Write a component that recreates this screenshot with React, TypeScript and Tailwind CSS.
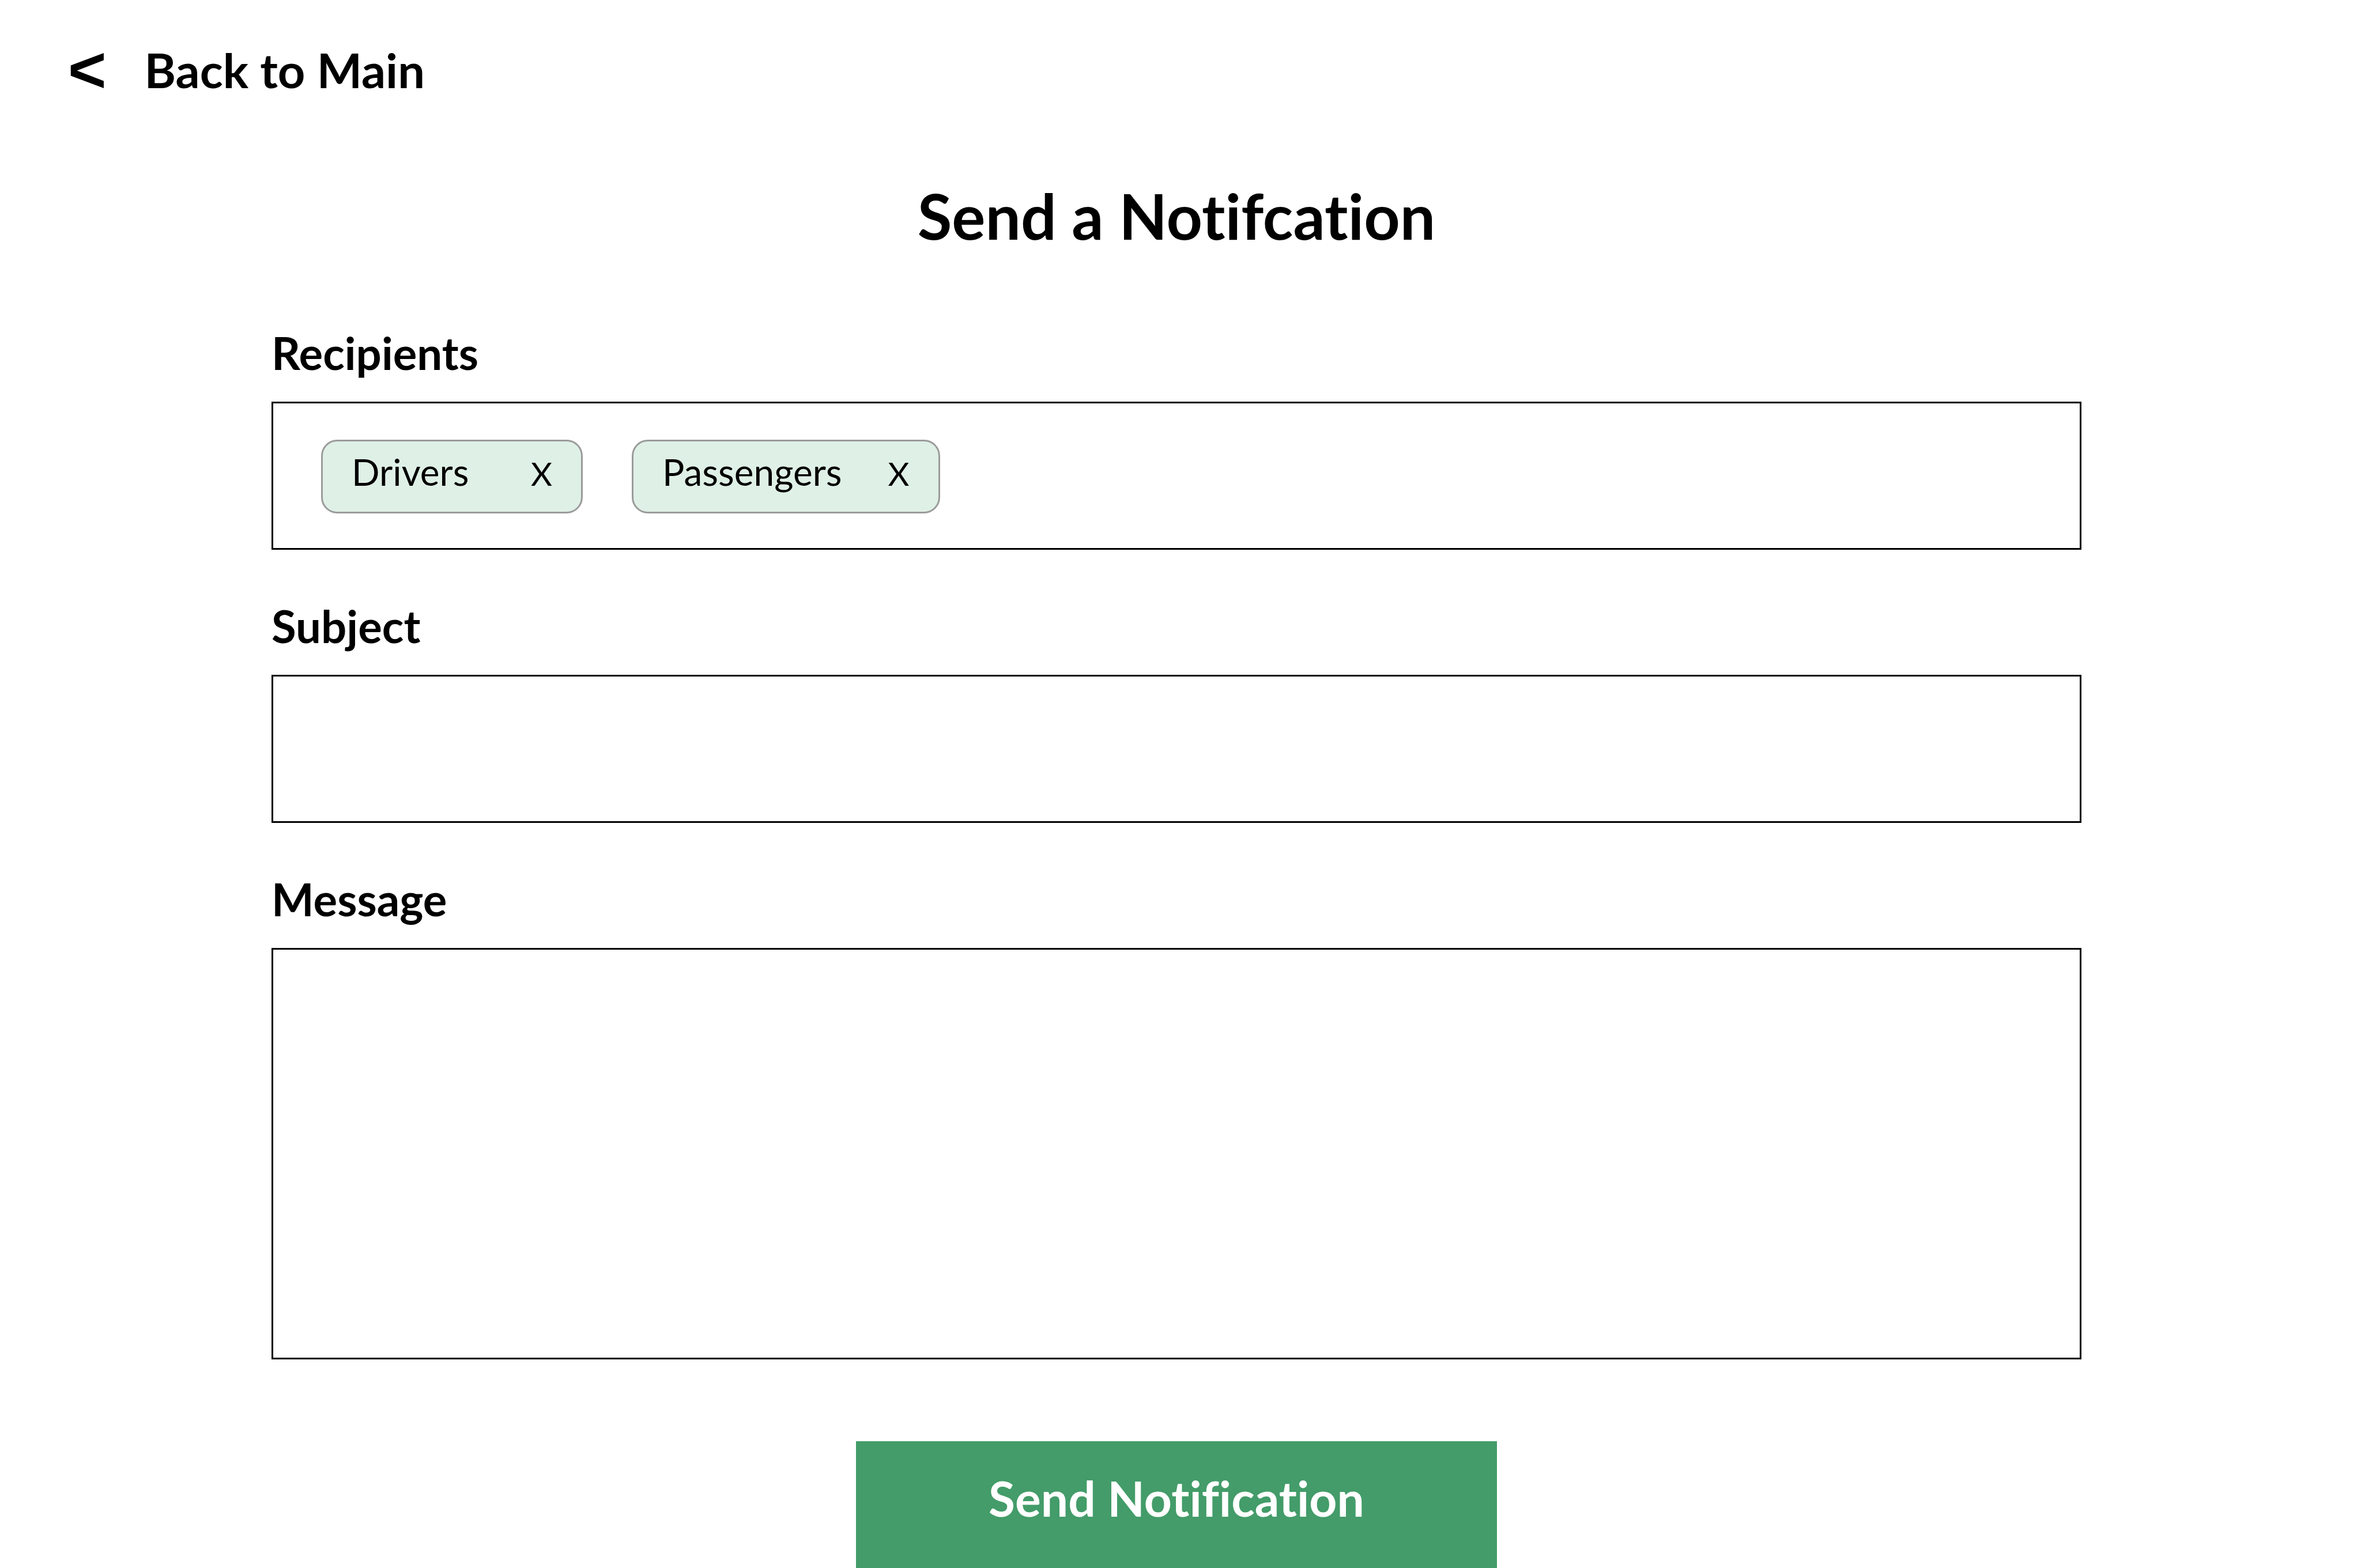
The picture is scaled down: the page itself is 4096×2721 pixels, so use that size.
import { useState } from 'react';

const field = 'flex flex-col gap-[38px]';
const fieldLabel = 'block text-[78px] leading-[94px] font-bold';
const fieldBox = 'w-full border-[3px] border-black bg-white px-[83px]';
const fieldText = 'block text-[64px] font-normal outline-none';

function Chip({ name, onRemove }: { name: string; onRemove: () => void }) {
  return (
    <li className="flex h-32 min-w-[454px] items-baseline justify-between gap-20 rounded-[28px] border-[3px] border-[#9b9b9b] bg-[#dff0e6] px-[50px] pt-[15px] leading-[76px]">
      <span className="text-[64px]">{name}</span>
      <button type="button" aria-label={`Remove ${name}`} onClick={onRemove} className="cursor-pointer text-[57px]">
        X
      </button>
    </li>
  );
}

export default function App() {
  const [recipients, setRecipients] = useState(['Drivers', 'Passengers']);

  return (
    <div className="flex min-h-screen flex-col bg-white font-['Lato',sans-serif] text-black [font-variant-ligatures:none]">
      <header className="pt-[71px] pl-[118px]">
        <a href="#main" className="inline-flex items-center gap-[66px] text-[83px] leading-[100px] font-bold">
          <span aria-hidden="true" className="font-['Liberation_Sans',sans-serif] text-[114px]">
            &lt;
          </span>
          Back to Main
        </a>
      </header>

      <main id="main" className="flex grow flex-col pr-[485px] pl-[471px]">
        <h1 className="mt-[138px] text-center text-[109px] leading-[130px] font-bold">Send a Notifcation</h1>

        <form className="mt-[126px] flex grow flex-col" onSubmit={(e) => e.preventDefault()}>
          <div className="flex flex-col gap-[85px]">
            <div className={field} role="group" aria-labelledby="recipients-label">
              <span id="recipients-label" className={fieldLabel}>
                Recipients
              </span>
              <ul className={`${fieldBox} flex min-h-[257px] flex-wrap items-start gap-[85px] pt-[63px] pb-[60px]`}>
                {recipients.map((name) => (
                  <Chip
                    key={name}
                    name={name}
                    onRemove={() => setRecipients(recipients.filter((r) => r !== name))}
                  />
                ))}
              </ul>
            </div>

            <div className={field}>
              <label htmlFor="subject" className={fieldLabel}>
                Subject
              </label>
              <input id="subject" type="text" className={`${fieldBox} ${fieldText} h-[257px]`} />
            </div>

            <div className={field}>
              <label htmlFor="message" className={fieldLabel}>
                Message
              </label>
              <textarea id="message" className={`${fieldBox} ${fieldText} h-[714px] resize-none py-[63px]`} />
            </div>
          </div>

          <button
            type="submit"
            className="mt-[142px] flex w-[1112px] grow cursor-pointer items-start justify-center self-center bg-[#439c69] pt-[49px] pb-[71px] text-[84px] leading-[100px] font-bold text-white"
          >
            Send Notification
          </button>
        </form>
      </main>
    </div>
  );
}
